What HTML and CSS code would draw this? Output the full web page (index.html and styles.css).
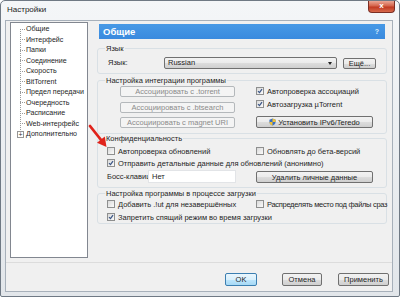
FILE: index.html
```html
<!DOCTYPE html>
<html lang="ru">
<head>
    <meta charset="UTF-8">
    <meta name="viewport" content="width=device-width, initial-scale=1.0">
    <title>Настройки</title>
    <link rel="stylesheet" href="styles.css">
</head>
<body>
    <div class="window">
        <div class="titlebar">
            <span class="title">Настройки</span>
            <div class="close">x</div>
        </div>
        <div class="client">
            <div class="main">
                <ul class="tree">
                    <li>Общие</li>
                    <li>Интерфейс</li>
                    <li>Папки</li>
                    <li>Соединение</li>
                    <li>Скорость</li>
                    <li>BitTorrent</li>
                    <li>Предел передачи</li>
                    <li>Очередность</li>
                    <li>Расписание</li>
                    <li>Web-интерфейс</li>
                    <li class="more"><span class="plus">+</span>Дополнительно</li>
                </ul>
                <div class="page">
                    <div class="page-head">
                        <span>Общие</span>
                        <span class="help">?</span>
                    </div>

                    <fieldset class="group g-lang">
                        <legend>Язык</legend>
                        <div class="lang-row">
                            <span class="lang-label">Язык:</span>
                            <div class="combo">Russian<span class="drop"></span></div>
                            <button class="btn btn-more">Ещё...</button>
                        </div>
                    </fieldset>

                    <fieldset class="group g-assoc">
                        <legend>Настройка интеграции программы</legend>
                        <div class="assoc-cols">
                            <div class="assoc-left">
                                <button class="btn" disabled>Ассоциировать с .torrent</button>
                                <button class="btn" disabled>Ассоциировать с .btsearch</button>
                                <button class="btn" disabled>Ассоциировать с magnet URI</button>
                            </div>
                            <div class="assoc-right">
                                <label class="check"><span class="cb"><svg viewBox="0 0 6 6"><path d="M1 3.1 L2.5 4.6 L5 1.2"/></svg></span>Автопроверка ассоциаций</label>
                                <label class="check"><span class="cb"><svg viewBox="0 0 6 6"><path d="M1 3.1 L2.5 4.6 L5 1.2"/></svg></span>Автозагрузка µTorrent</label>
                                <button class="btn btn-ipv6">
                                    <svg class="shield" viewBox="0 0 8 9">
                                        <path d="M4 0.5 L7.5 1.8 L7.5 4.6 C7.5 6.6 5.9 7.8 4 8.6 C2.1 7.8 0.5 6.6 0.5 4.6 L0.5 1.8 Z" fill="#3a6fc4"/>
                                        <path d="M4 0.5 L7.5 1.8 L7.5 4.5 L4 4.5 Z" fill="#f2c230"/>
                                        <path d="M0.5 4.5 L4 4.5 L4 8.6 C2.1 7.8 0.5 6.6 0.5 4.6 Z" fill="#f2c230"/>
                                    </svg>Установить IPv6/Teredo
                                </button>
                            </div>
                        </div>
                    </fieldset>

                    <fieldset class="group g-privacy">
                        <legend>Конфиденциальность</legend>
                        <div class="opts">
                            <label class="check"><span class="cb"></span>Автопроверка обновлений</label>
                            <label class="check"><span class="cb"></span>Обновлять до бета-версий</label>
                            <label class="check wide"><span class="cb"><svg viewBox="0 0 6 6"><path d="M1 3.1 L2.5 4.6 L5 1.2"/></svg></span>Отправить детальные данные для обновлений (анонимно)</label>
                            <div class="boss">
                                <span class="boss-label">Босс-клавиш</span>
                                <div class="edit">Нет</div>
                            </div>
                            <button class="btn btn-clear">Удалить личные данные</button>
                        </div>
                    </fieldset>

                    <fieldset class="group g-load">
                        <legend>Настройка программы в процессе загрузки</legend>
                        <div class="opts">
                            <label class="check"><span class="cb"></span>Добавить .!ut для незавершённых</label>
                            <label class="check tight"><span class="cb"></span>Распределять место под файлы сраз</label>
                            <label class="check wide"><span class="cb"><svg viewBox="0 0 6 6"><path d="M1 3.1 L2.5 4.6 L5 1.2"/></svg></span>Запретить спящий режим во время загрузки</label>
                        </div>
                    </fieldset>
                </div>
            </div>
            <div class="footer">
                <button class="btn btn-ok">OK</button>
                <button class="btn btn-cancel">Отмена</button>
                <button class="btn btn-apply">Применить</button>
            </div>
        </div>

        <!-- red pointer drawn over the dialog -->
        <svg class="pointer" viewBox="0 0 24 28">
            <line x1="4" y1="5" x2="15.5" y2="19.5" stroke="#e0231b" stroke-width="2.8" stroke-linecap="round"/>
            <polygon points="20.5,26 11,21.8 18.8,15.6" fill="#e0231b"/>
        </svg>
    </div>
</body>
</html>
```

FILE: styles.css
```css
* {
    box-sizing: border-box;
}

body {
    margin: 0;
    width: 400px;
    height: 297px;
    overflow: hidden;
    font-family: 'Liberation Sans', Arial, sans-serif;
    font-size: 7.5px;
    color: #1e1e1e;
    background-color: #fff;
}

.window {
    position: relative;
    width: 400px;
    height: 297px;
    border: 1px solid #6f7984;
    border-radius: 5px 5px 2px 2px;
    background: linear-gradient(#f4f6f8, #e2e6ea);
    display: flex;
    flex-direction: column;
}

.titlebar {
    height: 19px;
    display: flex;
    justify-content: space-between;
    align-items: flex-start;
    padding-left: 6px;
}

.title {
    margin-top: 4px;
    font-size: 8px;
    color: #1b1b1b;
}

.close {
    width: 27px;
    height: 12px;
    margin-right: 4px;
    border: 1px solid #7b2e24;
    border-top: none;
    border-radius: 0 0 4px 4px;
    background: linear-gradient(#eba796, #d4634a 45%, #c13a22 55%, #d76a4c);
    color: #fff;
    font-size: 8px;
    font-weight: bold;
    line-height: 10px;
    text-align: center;
}

.client {
    flex: 1;
    margin: 0 6px 4px 4px;
    background-color: #f0f0f0;
    border: 1px solid #a7b0ba;
    display: flex;
    flex-direction: column;
}

.main {
    display: flex;
    padding: 1px 0 0 4px;
}

/* left navigation tree */
.tree {
    width: 78px;
    height: 236px;
    margin: 0;
    padding: 1px 0 0 0;
    list-style: none;
    font-size: 7.1px;
    background-color: #fff;
    border: 1px solid #828790;
    background-image: repeating-linear-gradient(to bottom, #9a9a9a 0 1px, transparent 1px 2px);
    background-size: 1px 105px;
    background-position: 9px 6px;
    background-repeat: no-repeat;
}

.tree li {
    line-height: 10.5px;
    white-space: nowrap;
}

.tree li::before {
    content: "";
    display: inline-block;
    width: 5px;
    height: 1px;
    margin: 0 1px 0 9px;
    vertical-align: middle;
    background-image: repeating-linear-gradient(to right, #9a9a9a 0 1px, transparent 1px 2px);
}

.tree li.more::before {
    display: none;
}

.plus {
    display: inline-block;
    width: 7px;
    height: 7px;
    margin: 0 2px 0 6px;
    border: 1px solid #969696;
    background-color: #fff;
    color: #333;
    font-size: 7px;
    line-height: 5px;
    text-align: center;
    vertical-align: middle;
}

/* right settings page */
.page {
    width: 290px;
    margin-left: 9px;
}

.page-head {
    height: 15px;
    margin: 2px 2px 0 2px;
    padding: 0 6px 0 4px;
    display: flex;
    justify-content: space-between;
    align-items: center;
    background: linear-gradient(#4799e6, #3a8ade);
    color: #fff;
    font-size: 9.5px;
    font-weight: bold;
}

.help {
    font-size: 7px;
    color: #dcebfa;
}

.group {
    margin: 0;
    padding: 0 0 0 7px;
    min-width: 0;
    border: 1px solid #d9e0e5;
    border-radius: 3px;
}

.group legend {
    padding: 0 1px;
    line-height: 9px;
}

.g-lang {
    margin-top: 5px;
    padding-top: 4px;
    padding-bottom: 4px;
}

.g-assoc {
    margin-top: 2px;
    padding-top: 1px;
    padding-bottom: 5px;
}

.g-privacy {
    padding-top: 3px;
    padding-bottom: 4px;
}

.g-load {
    margin-top: 1px;
    padding-top: 1px;
    padding-bottom: 1px;
}

.lang-row {
    display: flex;
    align-items: flex-start;
    margin-left: 3px;
}

.lang-label {
    width: 56px;
    line-height: 12px;
}

.combo {
    position: relative;
    width: 173px;
    height: 12px;
    padding-left: 3px;
    line-height: 10px;
    border: 1px solid #707070;
    border-radius: 2px;
    background: linear-gradient(#f2f2f2, #ebebeb 50%, #dddddd 50%, #cfcfcf);
}

.drop {
    position: absolute;
    right: 4px;
    top: 4px;
    border-left: 2px solid transparent;
    border-right: 2px solid transparent;
    border-top: 3px solid #222;
}

.btn {
    font: inherit;
    color: #1e1e1e;
    padding: 0;
    border: 1px solid #707070;
    border-radius: 2px;
    background: linear-gradient(#f2f2f2, #ebebeb 50%, #dddddd 50%, #cfcfcf);
    white-space: nowrap;
    display: flex;
    align-items: center;
    justify-content: center;
}

.btn:disabled {
    color: #8b8b8b;
    border-color: #b4b8bb;
    background: #f4f4f4;
}

.btn-more {
    width: 33px;
    height: 11px;
    margin: 1px 0 0 6px;
}

.assoc-cols {
    display: grid;
    grid-template-columns: 115px 117px;
    column-gap: 21px;
    margin-left: 15px;
}

.assoc-left {
    display: flex;
    flex-direction: column;
    gap: 4.5px;
}

.assoc-left .btn {
    height: 11px;
}

.assoc-right {
    display: flex;
    flex-direction: column;
    gap: 3px;
}

.btn-ipv6 {
    height: 12px;
    margin-top: 4px;
}

.shield {
    width: 7px;
    height: 8px;
    margin-right: 2px;
}

.check {
    display: flex;
    align-items: center;
    height: 10px;
    white-space: nowrap;
}

.check.tight {
    letter-spacing: -0.3px;
}

.cb {
    flex: none;
    width: 8px;
    height: 8px;
    margin-right: 3px;
    border: 1px solid #8e8f8f;
    background: linear-gradient(135deg, #d9d9d9, #fbfbfb);
    display: flex;
    align-items: center;
    justify-content: center;
}

.cb svg {
    width: 6px;
    height: 6px;
    fill: none;
    stroke: #3e5888;
    stroke-width: 1.3;
}

.opts {
    display: grid;
    grid-template-columns: 149px 127px;
    row-gap: 2px;
    margin-left: 2px;
}

.g-load .opts {
    row-gap: 3px;
}

.check.wide {
    grid-column: 1 / -1;
}

.boss {
    display: flex;
    align-items: center;
    height: 13px;
    white-space: nowrap;
}

.boss-label {
    flex: none;
    width: 41px;
}

.edit {
    width: 88px;
    height: 13px;
    padding-left: 3px;
    line-height: 11px;
    background-color: #fff;
    border: 1px solid #e2e4e7;
}

.btn-clear {
    width: 117px;
    height: 12px;
    margin-top: 1px;
}

.footer {
    margin-top: auto;
    height: 29px;
    padding: 10px 3px 0 0;
    border-top: 1px solid #dcdcdc;
    display: flex;
    justify-content: flex-end;
    align-items: flex-start;
}

.footer .btn {
    height: 13px;
}

.btn-ok {
    width: 32px;
    margin-right: 25px;
    border-color: #3c7fb1;
    background: linear-gradient(#eaf6fd, #d9f0fc 50%, #bee6fd 50%, #a7d9f5);
}

.btn-cancel {
    width: 40px;
    margin-right: 16px;
}

.btn-apply {
    width: 51px;
}

.pointer {
    position: absolute;
    left: 85px;
    top: 120px;
    width: 24px;
    height: 28px;
}
```
